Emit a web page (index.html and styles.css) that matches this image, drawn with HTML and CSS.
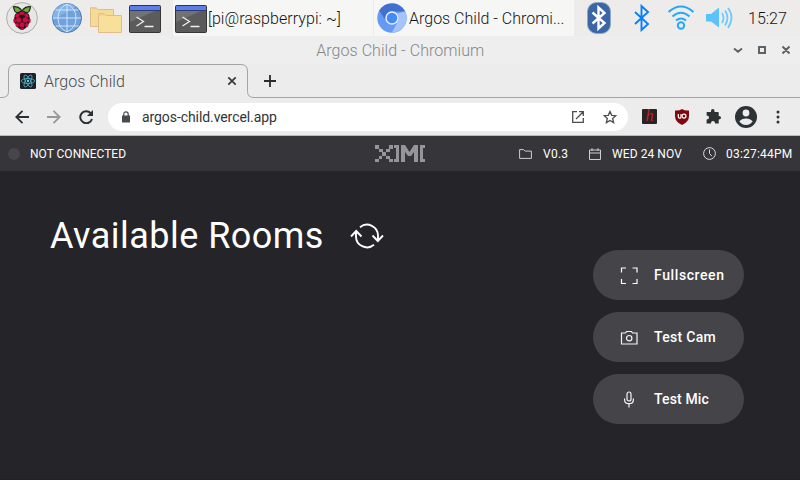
FILE: index.html
```html
<!DOCTYPE html>
<html lang="en">
<head>
<meta charset="utf-8">
<title>Argos Child</title>
<link rel="stylesheet" href="styles.css">
</head>
<body>
<div class="screen">
  <header class="taskbar">
    <div class="launchers">
      <svg class="berry" width="32" height="32" viewBox="0 0 32 32">
        <circle cx="16" cy="16" r="15.4" fill="#e5e6e6" stroke="#aaadae"/>
        <path d="M7.5 4.8Q12 4 15 7.5q.6.8.5 2.5Q11 12 9 9.5 7.7 7 7.5 4.8ZM24.5 4.8Q20 4 17 7.5q-.6.8-.5 2.5 4.500 2 6.500-.5 1.300-2.500 1.500-4.700Z" fill="#72a842" stroke="#172810" stroke-width="1.200"/>
        <path d="M16 8.500q3 0 5 2.500 2.700 1 2.500 4 2 4-1 7-1 4-6.500 6-5.500-2-6.500-6-3-3-1-7-.2-3 2.500-4 2-2.500 5-2.500Z" fill="#26131c"/>
        <g fill="#c90f43"><ellipse cx="16" cy="11.200" rx="2.800" ry="1.700"/><ellipse cx="11.400" cy="13.600" rx="2.400" ry="1.800" transform="rotate(-35 11.400 13.600)"/><ellipse cx="20.600" cy="13.600" rx="2.400" ry="1.800" transform="rotate(35 20.600 13.600)"/><circle cx="12.700" cy="18" r="2.700"/><circle cx="19.300" cy="18" r="2.700"/><ellipse cx="8.600" cy="18.800" rx="1.200" ry="2.500"/><ellipse cx="23.400" cy="18.800" rx="1.200" ry="2.500"/><circle cx="16" cy="22.800" r="2.500"/><ellipse cx="11.200" cy="23" rx="1.700" ry="1.900"/><ellipse cx="20.800" cy="23" rx="1.700" ry="1.900"/><ellipse cx="16" cy="27" rx="1.900" ry="1"/></g>
      </svg>
      <svg class="globe" width="32" height="32" viewBox="0 0 32 32">
        <circle cx="16" cy="16" r="14.500" fill="#6fa1dc" stroke="#4b78ae"/>
        <path d="M1.800 18A14.300 14.300 0 0 1 25 4.800Z" fill="#82b2ec"/>
        <path d="M16 2v28M2 16h28M4.500 8h23M4.500 24h23M16 2q-9 4-9 14t9 14M16 2q9 4 9 14t-9 14" fill="none" stroke="#dce9f5" stroke-width=".9"/>
      </svg>
      <svg class="folders" width="34" height="30" viewBox="0 0 34 30">
        <path d="M1.500 20.500V1.500H7l2 2h15.500v17Z" fill="#f5dc96" stroke="#dcbd8b"/><path d="M1 1h6l1 2H1Z" fill="#f6c887"/>
        <path d="M9.500 26.500v-19H15l2 2h15.500v17Z" fill="#f8e09a" stroke="#dcbd8b"/><path d="M9.500 7.500H15l1 2H9.500Z" fill="#f6c887"/>
      </svg>
      <svg width="32" height="28" viewBox="0 0 32 28">
        <rect x=".5" y=".5" width="31" height="27" rx="1" fill="#5b5b5b" stroke="#353535"/><path d="M1 17V6h25Z" fill="#727272"/><path d="M1 1h30v4H1Z" fill="#5b7ee9"/><path d="M1 5.500h30" stroke="#293a76"/><path d="M7.500 12l7 4.500-7 4.500M15.500 21.500h9" fill="none" stroke="#eee" stroke-width="1.300"/>
      </svg>
    </div>
    <div class="task task-term">
      <svg width="32" height="28" viewBox="0 0 32 28">
        <rect x=".5" y=".5" width="31" height="27" rx="1" fill="#5b5b5b" stroke="#353535"/><path d="M1 17V6h25Z" fill="#727272"/><path d="M1 1h30v4H1Z" fill="#5b7ee9"/><path d="M1 5.500h30" stroke="#293a76"/><path d="M7.500 12l7 4.500-7 4.500M15.500 21.500h9" fill="none" stroke="#eee" stroke-width="1.300"/>
      </svg>
      <span class="task-label">[pi@raspberrypi: ~]</span>
    </div>
    <div class="task task-web">
      <svg width="30" height="30" viewBox="0 0 30 30">
        <circle cx="15" cy="15" r="14.700" fill="#6599f3"/><path d="M2.300 7.700A14.700 14.700 0 0 1 28 8.500H15a6.500 6.500 0 0 0-6.200 9Z" fill="#4270d0"/><path d="M28 8.500a14.700 14.700 0 0 1-13.200 21.200L21 18q1.500-5-1-7.500Z" fill="#a4c4fb"/><circle cx="15" cy="15" r="6" fill="#438bf5" stroke="#e9f1ff" stroke-width="1.400"/>
      </svg>
      <span class="task-label">Argos Child - Chromi...</span>
    </div>
    <div class="tray">
      <svg class="bt-badge" width="24" height="32" viewBox="0 0 24 32"><rect x=".5" y=".5" width="23" height="31" rx="9" fill="#3b66a5" stroke="#8da9c8"/><path d="M5.500 10.500l12 10.500-6 5.500v-21l6 5.500-12 10.500" fill="none" stroke="#fff" stroke-width="2.400"/></svg>
      <svg class="bt" width="16" height="28" viewBox="0 0 16 28"><path d="M1 8l13 12-6.500 6V2L14 8 1 20" fill="none" stroke="#087efb" stroke-width="1.900"/></svg>
      <svg class="wifi" width="28" height="26" viewBox="0 0 28 26"><g fill="none" stroke="#25a8fa" stroke-width="2"><path d="M1.500 7q12.500-11 25 0M5.500 11.500q8.500-7.500 17 0M9 15.500q5-4 10 0"/><circle cx="14" cy="20.500" r="3.200"/></g></svg>
      <svg class="volume" width="27" height="22" viewBox="0 0 27 22"><path d="M0 7h5l8-6.500v20L5 14.500H0Z" fill="#5bc3fc"/><path d="M16 6q3 5 0 10M19 3.500q5 7 0 15M22 1q7 9 0 20" fill="none" stroke="#70cafb" stroke-width="1.800"/></svg>
      <time class="clock">15:27</time>
    </div>
  </header>

  <div class="titlebar">
    <span class="window-title">Argos Child - Chromium</span>
    <svg class="window-controls" width="58" height="12" viewBox="0 0 58 12"><g fill="none" stroke="#606365" stroke-width="2"><path d="M2 4.500l4 3.200 4-3.200M27 3h6v6h-6ZM50.500 2.500l7 7M57.500 2.500l-7 7"/></g></svg>
  </div>

  <div class="tabstrip">
    <svg class="tab-outline" width="800" height="34" viewBox="0 0 800 34"><path d="M0 33.500h2q6.500 0 6.500-6V7q0-6.500 6.500-6.500h226q6.500 0 6.500 6.500v20.500q0 6 6.500 6h546" fill="none" stroke="#a3a5a6"/></svg>
    <svg class="favicon" width="16" height="16" viewBox="0 0 16 16"><rect width="16" height="16" rx="1.500" fill="#1e2023"/><g fill="none" stroke="#4eb4d0" stroke-width=".8"><ellipse cx="8" cy="8" rx="6.700" ry="2.500"/><ellipse cx="8" cy="8" rx="6.700" ry="2.500" transform="rotate(60 8 8)"/><ellipse cx="8" cy="8" rx="6.700" ry="2.500" transform="rotate(120 8 8)"/></g><circle cx="8" cy="8" r="1.200" fill="#61d1ec"/></svg>
    <span class="tab-title">Argos Child</span>
    <svg class="tab-close" width="10" height="10" viewBox="0 0 10 10"><path d="M1.300 1.300l7.400 7.400M8.700 1.300L1.300 8.700" stroke="#36393b" stroke-width="1.700"/></svg>
    <svg class="tab-new" width="12" height="12" viewBox="0 0 12 12"><path d="M6 0v12M0 6h12" stroke="#272b2d" stroke-width="1.800"/></svg>
  </div>

  <div class="toolbar">
    <div class="nav">
      <svg width="14" height="14" viewBox="0 0 14 14"><path d="M14 7H1.500M7.500.8L1.300 7l6.200 6.200" fill="none" stroke="#2b3032" stroke-width="1.800"/></svg>
      <svg width="14" height="14" viewBox="0 0 14 14"><path d="M0 7h12.500M6.500.8L12.700 7l-6.200 6.200" fill="none" stroke="#969899" stroke-width="1.800"/></svg>
      <svg width="14" height="14" viewBox="0 0 14 14"><path d="M11.600 3A6 6 0 1 0 13 9" fill="none" stroke="#2b3032" stroke-width="2"/><path d="M14 0v6H8Z" fill="#2b3032"/></svg>
    </div>
    <div class="omnibox">
      <svg class="lock" width="8" height="12" viewBox="0 0 8 12"><path d="M0 4.500h8V11q0 .6-.6.600H.6Q0 11.600 0 11Z" fill="#484b4d"/><path d="M1.800 5V3q0-2.200 2.200-2.200T6.200 3v2" fill="none" stroke="#484b4d" stroke-width="1.200"/></svg>
      <span class="url">argos-child.vercel.app</span>
      <svg class="open" width="12" height="12" viewBox="0 0 12 12"><path d="M5 .7H.7v10.600h10.600V7M7 .7h4.300V5M11.300.7L4 8" fill="none" stroke="#4b4e50" stroke-width="1.300"/></svg>
      <svg class="star" width="14" height="14" viewBox="0 0 14 14"><path d="M7 1.400l1.700 3.900 4.100.4-3.100 2.800.9 4.100L7 10.400l-3.600 2.200.9-4.100-3.100-2.800 4.100-.4Z" fill="none" stroke="#4b4e50" stroke-width="1.300"/></svg>
    </div>
    <div class="extensions">
      <span class="ext-h">h</span>
      <span class="shield"><svg width="14" height="16" viewBox="0 0 14 16"><path d="M7 0q3 2 7 1.500V7q0 6-7 9-7-3-7-9V1.500Q4 2 7 0Z" fill="#800610"/><path d="M3.300 5v2.800q0 1.400 1.400 1.400T6 7.800V5" fill="none" stroke="#fff" stroke-width="1.200"/><circle cx="9" cy="7.100" r="2" fill="none" stroke="#fff" stroke-width="1.200"/></svg></span>
      <svg class="puzzle" width="15" height="15" viewBox="0 0 15 15"><path d="M1 3h4V2q0-2 1.800-2T8.500 2v1H12q.7 0 .7.700V7q2.300-.2 2.300 1.700t-2.300 1.800v4H9q.2-2.600-2-2.600T5 14.500H.6v-4q2.400 0 2.400-2T.6 6.500V3.600Z" fill="#2c3133"/></svg>
      <svg class="profile" width="22" height="22" viewBox="0 0 22 22"><circle cx="11" cy="11" r="11" fill="#2c3337"/><circle cx="11" cy="7" r="3.400" fill="#ececec"/><path d="M4.300 15.300q2.300-2.900 6.700-2.900t6.700 2.900Q15.500 19 11 19t-6.700-3.700Z" fill="#ececec"/></svg>
      <svg class="more" width="4" height="14" viewBox="0 0 4 14"><g fill="#2c3133"><circle cx="2" cy="2" r="1.500"/><circle cx="2" cy="7" r="1.500"/><circle cx="2" cy="12" r="1.500"/></g></svg>
    </div>
  </div>

  <main class="app">
    <div class="status">
      <div class="connection"><i class="dot"></i><span>NOT CONNECTED</span></div>
      <svg class="logo" width="51" height="18" viewBox="0 0 51 18" role="img" aria-label="XIMI"><g fill="#96959b"><path d="M0 0h4v4H0ZM4 4h4v3H4ZM7 7h4v4H7ZM11 4h4v3h-4ZM14 0h4v4h-4ZM4 11h3v3H4ZM0 14h4v3H0ZM11 11h4v3h-4ZM14 14h4v3h-4Z"/><path d="M19 0h5v17h-5v-3h2V3h-2ZM26 0h4l4.500 7L39 0h4v17h-4V7l-3 4h-3l-3-4v10h-4ZM45 0h5v3h-2v11h2v3h-5Z"/></g></svg>
      <div class="facts">
        <svg width="13" height="10" viewBox="0 0 13 10"><path d="M.6 9.400V.6h4l1.500 1.500h6.300v7.300Z" fill="none" stroke="#cfced1"/></svg><span class="version">V0.3</span>
        <svg width="12" height="12" viewBox="0 0 12 12"><path d="M.5 2h11v9.500H.5ZM.5 5h11M3 .2V3M9 .2V3" fill="none" stroke="#cfced1"/></svg><span class="date">WED 24 NOV</span>
        <svg width="13" height="13" viewBox="0 0 13 13"><circle cx="6.500" cy="6.500" r="5.900" fill="none" stroke="#dddcdf"/><path d="M6.500 2.500v4L9 9.200" fill="none" stroke="#dddcdf"/></svg><span class="time">03:27:44PM</span>
      </div>
    </div>
    <div class="content">
      <section class="rooms">
        <h1>Available Rooms</h1>
        <svg class="refresh" width="34" height="26" viewBox="0 0 34 26"><path d="M10 4.200A11 11 0 0 1 28 13v4M22.500 12.500l5.300 5.500 5.200-5.500M24 21.800A11 11 0 0 1 6 13V8.500M1 13.500L6.200 8l5.300 5.500" fill="none" stroke="#fff" stroke-width="1.900"/></svg>
      </section>
      <nav class="actions">
        <button><svg width="18" height="18" viewBox="0 0 18 18"><path d="M1.500 5.500V1h4.500M12.500 1H17v4.500M17 12V16.500h-4.500M6 16.500H1.500v-4.500" fill="none" stroke="#fff" stroke-width="1.200"/></svg><span class="a-full">Fullscreen</span></button>
        <button><svg width="18" height="18" viewBox="0 0 18 18"><path d="M1.500 4h4l1-1.500h5l1 1.500h4.500v11H1.500Z" fill="none" stroke="#f4f4f4" stroke-width="1.200"/><circle cx="9.200" cy="9.200" r="2.700" fill="none" stroke="#f4f4f4" stroke-width="1.200"/></svg><span class="a-cam">Test Cam</span></button>
        <button><svg width="18" height="18" viewBox="0 0 18 18"><rect x="7" y="1" width="4" height="9" rx="2" fill="none" stroke="#f4f4f4" stroke-width="1.200"/><path d="M4.600 7.500v1.200q0 4 4.400 4t4.400-4V7.500M9 12.700V16.500" fill="none" stroke="#f4f4f4" stroke-width="1.200"/></svg><span class="a-mic">Test Mic</span></button>
      </nav>
    </div>
  </main>
</div>
</body>
</html>
```
FILE: styles.css
```css
* { box-sizing: border-box; }
body { margin: 0; font-family: Roboto, "Liberation Sans", sans-serif; }
svg { display: block; flex: none; }
span, time, h1 { white-space: nowrap; }
.screen { width: 800px; height: 480px; overflow: hidden; display: grid; grid-template-rows: 36px 28px 34px 38px 344px; background: #eee; }

.taskbar { display: flex; background: #edecea; font-weight: 300; font-size: 16px; color: #141414; }
.launchers { width: 173px; display: flex; align-items: center; padding-left: 6px; }
.globe { margin-left: 13px; }
.folders { margin: 5px 6px 0 6px; }
.launchers svg:last-child { margin-top: 1px; }
.berry { margin-top: -1px; }
.task { display: flex; align-items: center; background: #f6f6f4; }
.task-term { width: 200px; padding-left: 2px; }
.task-term svg { margin-top: 1px; }
.task-web { width: 201px; padding-left: 3px; border-left: 1px solid #ececea; }
.task-term .task-label { letter-spacing: .06px; margin-left: 1px; }
.task-web .task-label { margin-left: 2px; }
.tray { flex: 1; display: flex; align-items: center; padding-left: 13px; }
.bt { margin-left: 23px; }
.wifi { margin-left: 17px; }
.volume { margin-left: 11px; }
.clock { margin-left: 15px; }

.titlebar { position: relative; display: flex; justify-content: center; align-items: center; background: #eee; color: #84878a; font-size: 16px; font-weight: 300; letter-spacing: .05px; }
.window-controls { position: absolute; left: 732px; top: 8px; }

.tabstrip { position: relative; display: flex; align-items: center; background: #ececec; padding-left: 20px; }
.tab-outline { position: absolute; left: 0; top: 0; }
.tab-title { margin-left: 8px; width: 183px; font-size: 16px; font-weight: 300; letter-spacing: .05px; color: #464a4d; }
.tab-new { margin-left: 27px; }

.toolbar { display: flex; align-items: center; background: #ececec; border-bottom: 1px solid #b6babb; }
.nav { display: flex; gap: 18px; width: 108px; padding-left: 15px; }
.omnibox { display: flex; align-items: center; width: 520px; height: 28px; padding-left: 14px; border-radius: 14px; background: #fff; }
.url { width: 430px; margin-left: 12px; font-size: 14px; letter-spacing: -.08px; color: #303437; }
.star { margin-left: 19px; }
.extensions { display: flex; align-items: center; padding-left: 14px; }
.ext-h { width: 15px; height: 15px; background: #262626; color: #d71920; font: italic 400 16px/14px "Liberation Serif", serif; text-align: center; border-radius: 1px; }
.shield { margin-left: 18px; }
.puzzle { margin-left: 17px; }
.profile { margin-left: 14px; }
.more { margin-left: 19px; }

.app { background: #252429; color: #fff; border-bottom: 1px solid #241e23; }
.status { height: 35px; padding: 0 8px; display: grid; grid-template-columns: 367px 51px 1fr; align-items: center; background: #36353a; font-size: 12px; font-weight: 400; }
.connection { display: flex; align-items: center; gap: 10px; }
.dot { width: 12px; height: 12px; border-radius: 50%; background: #47464b; }
.facts { display: flex; align-items: center; padding-left: 93px; }
.version { width: 26px; margin: 0 20px 0 11px; letter-spacing: .25px; }
.date { width: 70px; margin: 0 21px 0 11px; letter-spacing: .08px; }
.time { margin-left: 10px; letter-spacing: .22px; }
.content { display: grid; grid-template-columns: 543px 151px; padding: 43px 0 0 50px; }
.rooms { display: flex; align-items: center; height: 44px; }
h1 { margin: 0; width: 300px; font-size: 36px; font-weight: 400; line-height: 44px; letter-spacing: .47px; }
.actions { display: grid; gap: 12px; padding-top: 36px; }
button { display: flex; align-items: center; width: 151px; height: 50px; padding: 0 0 0 27px; border: 0; border-radius: 25px; background: #454449; color: #fff; font: 500 14px Roboto, "Liberation Sans", sans-serif; }
button svg { margin: 2px 16px 0 0; }
.a-full { letter-spacing: .6px; }
.a-cam { letter-spacing: .3px; }
.a-mic { letter-spacing: .15px; }
```
